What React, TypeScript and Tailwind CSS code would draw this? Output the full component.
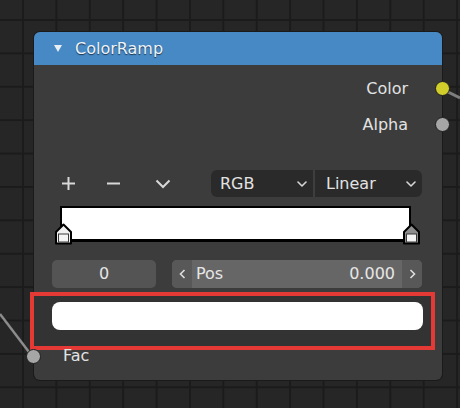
import { type ReactNode } from "react";

const FONT = "font-['DejaVu_Sans','Liberation_Sans',sans-serif]";

function Socket({ color, className }: { color: string; className: string }) {
  return (
    <span
      className={`absolute block h-[15px] w-[15px] rounded-full border border-[#1e1e1e] ${className}`}
      style={{ backgroundColor: color }}
    />
  );
}

function OutputRow({ label, children }: { label: string; children?: ReactNode }) {
  return (
    <div className="relative flex h-[36px] items-center justify-end pr-[34px] text-[16px] text-[#e2e2e2]">
      {label}
      {children}
    </div>
  );
}

function Chevron({ size = 10 }: { size?: number }) {
  return (
    <svg width={size} height={size * 0.6} viewBox="0 0 10 6" fill="none">
      <path d="M1 1 L5 5 L9 1" stroke="#d6d6d6" strokeWidth="1.6" strokeLinecap="round" strokeLinejoin="round" />
    </svg>
  );
}

function Stop({ top }: { top: string }) {
  return (
    <svg width="19" height="22" viewBox="0 0 19 22">
      <path d="M2 20.5 V9 L9.5 1.5 L17 9 V20.5 Z" fill={top} stroke="#000" strokeWidth="2" strokeLinejoin="round" />
      <rect x="4.5" y="11" width="10" height="8" fill="#f4f4f4" stroke="#3a3a3a" strokeWidth="1" />
    </svg>
  );
}

export default function App() {
  return (
    <div
      className={`relative h-[408px] w-[460px] overflow-hidden bg-[#262626] bg-[linear-gradient(to_right,#1b1b1b_2px,transparent_2px),linear-gradient(to_bottom,#1b1b1b_2px,transparent_2px)] bg-[size:33.4px_33.4px] bg-[position:22px_19px] pl-[34px] pt-[32px] ${FONT}`}
    >
      {/* wires */}
      <svg className="absolute left-0 top-0" width="460" height="408">
        <path d="M0 314 L32 356" stroke="#8c8c8c" strokeWidth="2.5" fill="none" />
        <path d="M444 90 L460 98" stroke="#7e7e7e" strokeWidth="3" fill="none" />
      </svg>

      {/* ColorRamp node */}
      <div className="relative flex h-[348px] w-[408px] flex-col rounded-[6px] bg-[#3c3c3c] shadow-[0_0_0_1px_#1a1a1a]">
        <div className="flex h-[33px] items-center gap-[13px] rounded-t-[6px] bg-[#4689c4] pl-[20px] text-[16px] text-[#eef3f8] [text-shadow:0_1px_1px_#1d3550]">
          <svg width="8" height="7" viewBox="0 0 8 7">
            <path d="M0 0 H8 L4 7 Z" fill="#e8eef4" />
          </svg>
          ColorRamp
        </div>

        <div className="pt-[6px]">
          <OutputRow label="Color">
            <Socket color="#d1ce2b" className="right-[-8px] top-[10px]" />
          </OutputRow>
          <OutputRow label="Alpha">
            <Socket color="#a6a6a6" className="right-[-8px] top-[10px]" />
          </OutputRow>
        </div>

        {/* + - v and dropdowns */}
        <div className="mt-[27px] flex h-[27px] items-center pl-[27px] pr-[20px]">
          <svg width="15" height="15" viewBox="0 0 15 15">
            <path d="M7.5 1 V14 M1 7.5 H14" stroke="#d8d8d8" strokeWidth="2" />
          </svg>
          <svg className="ml-[30px]" width="15" height="15" viewBox="0 0 15 15">
            <path d="M1 7.5 H14" stroke="#d8d8d8" strokeWidth="2" />
          </svg>
          <svg className="ml-[34px]" width="16" height="10" viewBox="0 0 16 10">
            <path d="M1.5 1.5 L8 8 L14.5 1.5" stroke="#d8d8d8" strokeWidth="2" fill="none" />
          </svg>
          <div className="ml-auto flex h-[27px] w-[211px] overflow-hidden rounded-[6px] bg-[#2a2a2a] text-[16px] text-[#e2e2e2]">
            <div className="flex w-[102px] items-center justify-between pl-[9px] pr-[6px]">
              RGB
              <Chevron />
            </div>
            <div className="w-[2px] bg-[#3e3e3e]" />
            <div className="flex flex-1 items-center justify-between pl-[11px] pr-[6px]">
              Linear
              <Chevron />
            </div>
          </div>
        </div>

        {/* ramp */}
        <div className="relative ml-[26px] mt-[9px] h-[39px] w-[352px]">
          <div className="h-[36px] w-[351px] border-x-2 border-b-[3px] border-t-2 border-black bg-white" />
          <div className="absolute left-[-6px] top-[17px]">
            <Stop top="#f0f0f0" />
          </div>
          <div className="absolute right-[-9px] top-[17px]">
            <Stop top="#8e8e8e" />
          </div>
        </div>

        {/* index / position */}
        <div className="mt-[15px] flex h-[28px] gap-[16px] pl-[18px] text-[16px] text-[#e6e6e6]">
          <div className="flex w-[104px] items-center justify-center rounded-[5px] bg-[#545454]">0</div>
          <div className="flex w-[250px] overflow-hidden rounded-[5px] bg-[#666666]">
            <div className="flex w-[20px] items-center justify-center bg-[#585858]">
              <svg width="7" height="10" viewBox="0 0 7 10">
                <path d="M5.5 1 L1.5 5 L5.5 9" stroke="#dedede" strokeWidth="1.6" fill="none" />
              </svg>
            </div>
            <div className="flex flex-1 items-center justify-between pl-[4px] pr-[7px]">
              <span>Pos</span>
              <span>0.000</span>
            </div>
            <div className="flex w-[20px] items-center justify-center bg-[#585858]">
              <svg width="7" height="10" viewBox="0 0 7 10">
                <path d="M1.5 1 L5.5 5 L1.5 9" stroke="#dedede" strokeWidth="1.6" fill="none" />
              </svg>
            </div>
          </div>
        </div>

        {/* highlighted Fac input */}
        <div className="ml-[-4px] mt-[4px] h-[58px] w-[405px] border-[4px] border-[#e53935] bg-[#333333] pl-[18px] pt-[6px]">
          <div className="h-[28px] w-[371px] rounded-[8px] bg-white" />
        </div>

        <div className="relative mt-[-2px] flex h-[16px] items-center pl-[29px] text-[16px] text-[#e2e2e2]">
          Fac
          <Socket color="#a6a6a6" className="left-[-8px] top-[1px]" />
        </div>
      </div>
    </div>
  );
}
